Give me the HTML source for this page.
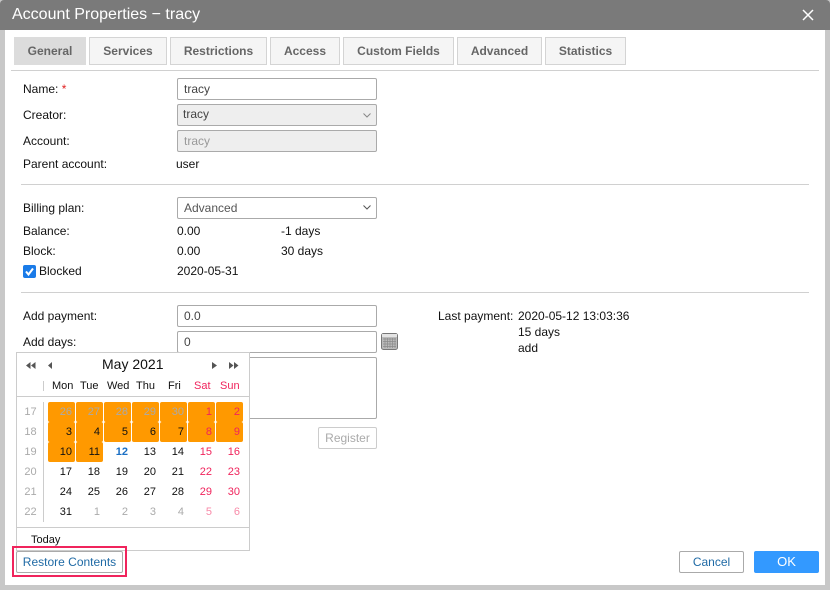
<!DOCTYPE html>
<html><head><meta charset="utf-8">
<style>
html,body{margin:0;padding:0}
body{width:830px;height:590px;overflow:hidden;background:#c8c8c8;position:relative;font:12px/14px "Liberation Sans",sans-serif;color:#111}
.a,.t,.f,.tab,.hr,.c,.w,.o{position:absolute;box-sizing:border-box}
.t{white-space:nowrap}
#title{left:0;top:0;width:830px;height:30px;background:#7a7a7a;border-radius:4px 4px 0 0}
#main{left:5px;top:30px;width:820px;height:555px;background:#fff}
.tab{top:37px;height:28px;background:#f5f5f5;border:1px solid #d4d4d4;color:#666;font-weight:bold;text-align:center;line-height:26px}
.hr{height:1px;background:#d0d0d0}
.f{left:177px;width:200px;height:22px;border:1px solid #aaa;border-radius:2px;background:#fff;line-height:20px;padding-left:6px;color:#444}
.g{background:#eee}
.c{width:28px;height:20px;text-align:right;padding-right:2px;line-height:20px;font-size:11px}
.w{left:17px;width:27px;text-align:center;color:#aaa;line-height:20px;height:20px;font-size:11px}
.o{width:27px;height:20px;background:#ff9900;border-radius:2px}
.d{font-size:11px;top:379px}
.r{color:#f0245c}.m{color:#aaa}.p{color:#f88aa8}
.btn{position:absolute;box-sizing:border-box;height:22px;border:1px solid #aaa;border-radius:2px;background:#fff;color:#1f6aa5;text-align:center;line-height:20px}
</style></head><body>
<div class="a" id="title"></div>
<div class="a" id="main"></div>
<div class="t" style="left:12px;top:5px;font-size:16px;line-height:20px;color:#fff">Account Properties − tracy</div>
<svg class="a" style="left:802px;top:9px" width="12" height="12"><path d="M1 1L11 11M11 1L1 11" stroke="#fff" stroke-width="1.500"/></svg>

<div class="tab" style="left:14px;width:72px;background:#dcdcdc;border-color:#dcdcdc">General</div>
<div class="tab" style="left:89px;width:78px">Services</div>
<div class="tab" style="left:170px;width:97px">Restrictions</div>
<div class="tab" style="left:270px;width:70px">Access</div>
<div class="tab" style="left:343px;width:111px">Custom Fields</div>
<div class="tab" style="left:457px;width:85px">Advanced</div>
<div class="tab" style="left:545px;width:81px">Statistics</div>
<div class="hr" style="left:11px;top:70px;width:808px"></div>

<div class="t" style="left:23px;top:82px">Name: <span style="color:#e02020">*</span></div>
<div class="f" style="top:78px">tracy</div>
<div class="t" style="left:23px;top:108px">Creator:</div>
<div class="f g" style="top:104px;padding-left:5px;line-height:18px">tracy</div>
<svg class="a" style="left:362px;top:112px" width="10" height="7"><path d="M1.500 1.500L5 5L8.500 1.500" stroke="#888" fill="none"/></svg>
<div class="t" style="left:23px;top:134px">Account:</div>
<div class="f g" style="top:130px;color:#999">tracy</div>
<div class="t" style="left:23px;top:157px">Parent account:</div>
<div class="t" style="left:176px;top:157px">user</div>

<div class="hr" style="left:21px;top:184px;width:788px"></div>
<div class="t" style="left:23px;top:201px">Billing plan:</div>
<div class="f" style="top:197px;color:#555">Advanced</div>
<svg class="a" style="left:362px;top:204px" width="10" height="7"><path d="M1.500 1.500L5 5L8.500 1.500" stroke="#555" fill="none"/></svg>
<div class="t" style="left:23px;top:224px">Balance:</div>
<div class="t" style="left:177px;top:224px">0.00</div>
<div class="t" style="left:281px;top:224px">-1 days</div>
<div class="t" style="left:23px;top:244px">Block:</div>
<div class="t" style="left:177px;top:244px">0.00</div>
<div class="t" style="left:281px;top:244px">30 days</div>
<svg class="a" style="left:23px;top:265px" width="13" height="13"><rect width="13" height="13" rx="2" fill="#1a7be8"/><path d="M3 6.500L5.500 9.500L10 3.500" stroke="#fff" stroke-width="2" fill="none"/></svg>
<div class="t" style="left:39px;top:264px">Blocked</div>
<div class="t" style="left:177px;top:264px">2020-05-31</div>
<div class="hr" style="left:21px;top:292px;width:788px"></div>

<div class="t" style="left:23px;top:309px">Add payment:</div>
<div class="f" style="top:305px">0.0</div>
<div class="t" style="left:23px;top:335px">Add days:</div>
<div class="f" style="top:331px">0</div>
<svg class="a" style="left:381px;top:333px" width="18" height="18"><rect x=".5" y=".5" width="16" height="16" rx="2" fill="#bbb" stroke="#777"/><rect x="1" y="1" width="15" height="3" fill="#e4e4e4"/><path d="M2 6H15M2 8.500H15M2 11H15M2 13.500H15M4 5V15M6.500 5V15M9 5V15M11.500 5V15M14 5V15" stroke="#8a8a8a" stroke-width=".7"/></svg>
<div class="f" style="top:357px;height:62px"></div>
<div class="btn" style="left:318px;top:427px;width:59px;color:#aaa;border-color:#ccc">Register</div>

<div class="t" style="left:438px;top:309px">Last payment:</div>
<div class="t" style="left:518px;top:309px">2020-05-12 13:03:36</div>
<div class="t" style="left:518px;top:325px">15 days</div>
<div class="t" style="left:518px;top:341px">add</div>

<div class="a" style="left:16px;top:352px;width:234px;height:199px;background:#fff;border:1px solid #ccc"></div>
<svg class="a" style="left:24px;top:362px" width="216" height="8" fill="#555"><path d="M6.500 0V7L2 3.500ZM11.500 0V7L7 3.500ZM28 0V7L24 3.500ZM188 0V7L193 3.500ZM205 0V7L209.500 3.500ZM210 0V7L214.500 3.500Z"/></svg>
<div class="t" style="left:102px;top:356px;font-size:14px;line-height:16px">May 2021</div>
<div class="a" style="left:43px;top:381px;width:1px;height:10px;background:#ccc"></div>
<div class="t d" style="left:52px">Mon</div>
<div class="t d" style="left:80px">Tue</div>
<div class="t d" style="left:107px">Wed</div>
<div class="t d" style="left:136px">Thu</div>
<div class="t d" style="left:168px">Fri</div>
<div class="t d r" style="left:194px">Sat</div>
<div class="t d r" style="left:220px">Sun</div>
<div class="hr" style="left:17px;top:396px;width:232px;background:#ccc"></div>
<div class="a" style="left:43px;top:402px;width:1px;height:120px;background:#ccc"></div>

<div class="o" style="left:48px;top:402px"></div><div class="o" style="left:76px;top:402px"></div><div class="o" style="left:104px;top:402px"></div><div class="o" style="left:132px;top:402px"></div><div class="o" style="left:160px;top:402px"></div><div class="o" style="left:188px;top:402px"></div><div class="o" style="left:216px;top:402px"></div>
<div class="o" style="left:48px;top:422px"></div><div class="o" style="left:76px;top:422px"></div><div class="o" style="left:104px;top:422px"></div><div class="o" style="left:132px;top:422px"></div><div class="o" style="left:160px;top:422px"></div><div class="o" style="left:188px;top:422px"></div><div class="o" style="left:216px;top:422px"></div>
<div class="o" style="left:48px;top:442px"></div><div class="o" style="left:76px;top:442px"></div>

<div class="w" style="top:402px">17</div><div class="w" style="top:422px">18</div><div class="w" style="top:442px">19</div><div class="w" style="top:462px">20</div><div class="w" style="top:482px">21</div><div class="w" style="top:502px">22</div>

<div class="c m" style="left:46px;top:402px">26</div><div class="c m" style="left:74px;top:402px">27</div><div class="c m" style="left:102px;top:402px">28</div><div class="c m" style="left:130px;top:402px">29</div><div class="c m" style="left:158px;top:402px">30</div><div class="c r" style="left:186px;top:402px">1</div><div class="c r" style="left:214px;top:402px">2</div>
<div class="c" style="left:46px;top:422px">3</div><div class="c" style="left:74px;top:422px">4</div><div class="c" style="left:102px;top:422px">5</div><div class="c" style="left:130px;top:422px">6</div><div class="c" style="left:158px;top:422px">7</div><div class="c r" style="left:186px;top:422px">8</div><div class="c r" style="left:214px;top:422px">9</div>
<div class="c" style="left:46px;top:442px">10</div><div class="c" style="left:74px;top:442px">11</div><div class="c" style="left:102px;top:442px;color:#1a6fc4;font-weight:bold">12</div><div class="c" style="left:130px;top:442px">13</div><div class="c" style="left:158px;top:442px">14</div><div class="c r" style="left:186px;top:442px">15</div><div class="c r" style="left:214px;top:442px">16</div>
<div class="c" style="left:46px;top:462px">17</div><div class="c" style="left:74px;top:462px">18</div><div class="c" style="left:102px;top:462px">19</div><div class="c" style="left:130px;top:462px">20</div><div class="c" style="left:158px;top:462px">21</div><div class="c r" style="left:186px;top:462px">22</div><div class="c r" style="left:214px;top:462px">23</div>
<div class="c" style="left:46px;top:482px">24</div><div class="c" style="left:74px;top:482px">25</div><div class="c" style="left:102px;top:482px">26</div><div class="c" style="left:130px;top:482px">27</div><div class="c" style="left:158px;top:482px">28</div><div class="c r" style="left:186px;top:482px">29</div><div class="c r" style="left:214px;top:482px">30</div>
<div class="c" style="left:46px;top:502px">31</div><div class="c m" style="left:74px;top:502px">1</div><div class="c m" style="left:102px;top:502px">2</div><div class="c m" style="left:130px;top:502px">3</div><div class="c m" style="left:158px;top:502px">4</div><div class="c p" style="left:186px;top:502px">5</div><div class="c p" style="left:214px;top:502px">6</div>

<div class="hr" style="left:17px;top:527px;width:232px;background:#ccc"></div>
<div class="t" style="left:31px;top:533px;font-size:11px">Today</div>

<div class="a" style="left:12px;top:546px;width:115px;height:31px;border:2px solid #f0245c"></div>
<div class="btn" style="left:16px;top:551px;width:107px">Restore Contents</div>
<div class="btn" style="left:679px;top:551px;width:65px">Cancel</div>
<div class="btn" style="left:754px;top:551px;width:65px;background:#3399ff;border-color:#3399ff;color:#fff;font-size:13px">OK</div>
</body></html>
